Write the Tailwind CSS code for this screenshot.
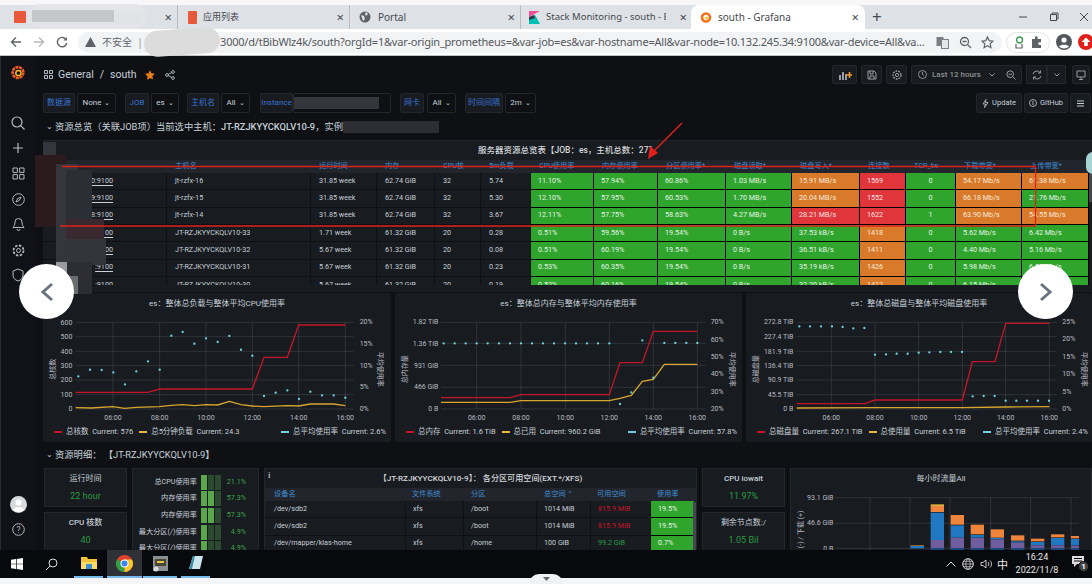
<!DOCTYPE html>
<html lang="en">
<head>
<meta charset="UTF-8" />
<title>south - Grafana</title>
<script src="https://cdn.jsdelivr.net/npm/@tailwindcss/browser@4"></script>
</head>
<body class="w-[1092px] h-[584px] overflow-hidden relative bg-[#f4f5f6] font-['Roboto','Noto_Sans_CJK_SC',sans-serif]">

<!-- browser chrome -->
<div class="h-[5px] bg-[#f7f7f8]"></div>
<div class="h-[24px] bg-[#dee1e6] flex items-end pl-[8px] text-[10px] text-[#45494e] font-['Noto_Sans','Noto_Sans_CJK_SC',sans-serif]">
  <div class="w-[170px] h-[24px] flex items-center pl-[6px] pr-[5px] border-r border-[#9ea2a7]/60 relative">
    <span class="w-[12px] h-[12px] bg-[#e8583a] rounded-[1px]"></span>
    <span class="ml-[4px] w-[112px] h-[13px] bg-[#c6c8cc]"></span>
    <span class="ml-auto text-[13px] leading-none">×</span>
  </div>
  <div class="w-[172px] h-[24px] flex items-center pl-[10px] pr-[5px] border-r border-[#9ea2a7]/60">
    <span class="w-[9px] h-[13px] bg-[#e8583a] rounded-[1px]"></span>
    <span class="ml-[6px] text-[9px]">应用列表</span>
    <span class="ml-auto text-[13px] leading-none">×</span>
  </div>
  <div class="w-[171px] h-[24px] flex items-center pl-[9px] pr-[5px] border-r border-[#9ea2a7]/60">
    <svg width="12" height="12" viewBox="0 0 12 12"><circle cx="6" cy="6" r="5.5" fill="#5f6368"/><path d="M2 4l3 1 1 3-2 2zM7 1l2 2-2 2-1-2z" fill="#dee1e6"/></svg>
    <span class="ml-[7px]">Portal</span>
    <span class="ml-auto text-[13px] leading-none">×</span>
  </div>
  <div class="w-[171px] h-[24px] flex items-center pl-[8px] pr-[5px]">
    <svg width="11" height="13" viewBox="0 0 11 13"><path d="M0 0h11L0 6z" fill="#f04e98"/><path d="M0 7l6-3 5 9H0z" fill="#00bfb3"/><path d="M0 6l5-2 1 3-6 2z" fill="#343741"/></svg>
    <span class="ml-[6px] w-[120px] whitespace-nowrap overflow-hidden text-[9.5px]">Stack Monitoring - south - Ela</span>
    <span class="ml-auto text-[13px] leading-none">×</span>
  </div>
  <div class="w-[174px] h-[24px] bg-white rounded-t-[8px] flex items-center pl-[9px] pr-[6px] -ml-[1px]">
    <svg width="12" height="13" viewBox="0 0 12 13"><circle cx="6" cy="6.5" r="4" fill="none" stroke="#f2711c" stroke-width="2.6"/><circle cx="6.5" cy="7" r="1.6" fill="#fbc02d"/></svg>
    <span class="ml-[6px]">south - Grafana</span>
    <span class="ml-auto text-[13px] leading-none">×</span>
  </div>
  <span class="ml-[7px] mb-[4px] text-[17px] leading-none">+</span>
  <div class="ml-auto h-[24px] w-[90px] flex items-center justify-between pl-[16px] pr-[3px] text-[#45494e]">
    <svg width="10" height="10" viewBox="0 0 10 10"><path d="M1 5h8" stroke="currentColor"/></svg>
    <svg width="10" height="10" viewBox="0 0 10 10"><path d="M1.5 2.5h6v6h-6zM3 2.5V1h6v6H7.5" fill="none" stroke="currentColor"/></svg>
    <svg width="10" height="10" viewBox="0 0 10 10"><path d="M1 1l8 8M9 1l-8 8" stroke="currentColor"/></svg>
  </div>
</div>
<div class="h-[27px] bg-white border-b border-[#bfc2c6] flex items-center text-[#5f6368]">
  <div class="w-[78px] flex items-center pl-[10px] gap-[11px] shrink-0">
    <svg width="12" height="12" viewBox="0 0 12 12"><path d="M11 6H2M6 1.5L1.5 6 6 10.5" fill="none" stroke="#5f6368" stroke-width="1.4"/></svg>
    <svg width="12" height="12" viewBox="0 0 12 12"><path d="M1 6h9M6 1.5L10.5 6 6 10.5" fill="none" stroke="#b5b8bc" stroke-width="1.4"/></svg>
    <svg width="12" height="12" viewBox="0 0 12 12"><path d="M10.3 4A4.7 4.7 0 1 0 10.7 7" fill="none" stroke="#5f6368" stroke-width="1.4"/><path d="M11 1v3.6H7.4z" fill="#5f6368"/></svg>
  </div>
  <div class="w-[924px] h-[21px] bg-[#f1f3f4] rounded-full flex items-center pl-[7px] relative shrink-0 text-[11px] font-['Noto_Sans','Noto_Sans_CJK_SC',sans-serif]">
    <svg width="11" height="10" viewBox="0 0 11 10"><path d="M5.5 0L11 10H0z" fill="#5f6368"/></svg>
    <span class="ml-[6px] text-[10px] whitespace-nowrap text-[#5f6368]">不安全</span>
    <span class="ml-[5px] text-[#9a9da1]">|</span>
    <span class="ml-[77px] whitespace-nowrap text-[#55585c] tracking-[-0.02em]">3000/d/tBibWlz4k/south?orgId=1&amp;var-origin_prometheus=&amp;var-job=es&amp;var-hostname=All&amp;var-node=10.132.245.34:9100&amp;var-device=All&amp;va...</span>
    <div class="absolute left-[66px] top-[-3px] w-[76px] h-[26px] bg-[#dcdcdc] rounded-full -rotate-[4deg]"></div>
    <svg class="absolute left-[858px] top-[4px]" width="13" height="13" viewBox="0 0 13 13"><rect x=".5" y="1" width="7" height="9" fill="#7b7f84"/><rect x="5.5" y="3.5" width="7" height="9" fill="#e4e6e8" stroke="#7b7f84"/></svg>
    <svg class="absolute left-[881px] top-[4px]" width="13" height="13" viewBox="0 0 13 13"><circle cx="5.5" cy="5.5" r="4" fill="none" stroke="#5f6368" stroke-width="1.3"/><path d="M8.5 8.5l3.5 3.5M3.5 5.5h4" stroke="#5f6368" stroke-width="1.3"/></svg>
    <svg class="absolute left-[903px] top-[4px]" width="13" height="13" viewBox="0 0 13 13"><path d="M6.5 1l1.7 3.6 3.8.5-2.8 2.7.7 3.9-3.4-1.9-3.4 1.9.7-3.9L1 5.1l3.800-.5z" fill="none" stroke="#5f6368" stroke-width="1.2"/></svg>
  </div>
  <div class="ml-[4px] w-[44px] h-[21px] rounded-full border border-[#e3e4e6] flex items-center justify-around px-[3px] shrink-0">
    <svg width="12" height="14" viewBox="0 0 12 14"><circle cx="6.5" cy="5" r="3" fill="none" stroke="#3a9b4d" stroke-width="1.4"/><path d="M3 9v4h6V9" fill="none" stroke="#5f6368" stroke-width="1.2"/></svg>
    <svg width="12" height="12" viewBox="0 0 12 12"><path d="M1 3h3V1.5a1.3 1.3 0 0 1 2.6 0V3H10v3.2H8.6a1.4 1.4 0 0 0 0 2.8H10V12H1z" fill="#5f6368"/></svg>
  </div>
  <svg class="ml-[6px] shrink-0" width="16" height="16" viewBox="0 0 16 16"><circle cx="8" cy="8" r="8" fill="#53575c"/><circle cx="8" cy="6" r="2.6" fill="#fff"/><path d="M3 12.5c1.5-2.5 8.5-2.5 10 0-2.5 2.5-7.5 2.5-10 0z" fill="#fff"/></svg>
  <svg class="ml-[6px] shrink-0" width="14" height="16" viewBox="0 0 14 16"><circle cx="8" cy="8" r="8" fill="#e0201b"/><path d="M8 3.500L3.500 8h2.700v4h3.600V8h2.700z" fill="#fff"/></svg>
</div>

<!-- grafana -->
<div class="h-[494px] bg-[#0e1014] flex overflow-hidden text-[#c7d0d9]">
  <nav class="w-[35px] shrink-0 bg-[#111217] border-l border-[#2a2c31] flex flex-col items-center text-[#b6b9bf] relative">
    <svg class="mt-[8px]" width="16" height="17" viewBox="0 0 16 17"><circle cx="8" cy="8.5" r="5.4" fill="none" stroke="#f05a28" stroke-width="2.6" stroke-dasharray="3 .7"/><circle cx="8.4" cy="9" r="2.6" fill="none" stroke="#fbb324" stroke-width="1.5"/></svg>
    <svg class="mt-[35px]" width="14" height="14" viewBox="0 0 14 14"><circle cx="6" cy="6" r="5" fill="none" stroke="currentColor" stroke-width="1.2"/><path d="M9.700 9.700L13.500 13.500" stroke="currentColor" stroke-width="1.2"/></svg>
    <svg class="mt-[12px]" width="12" height="12" viewBox="0 0 12 12"><path d="M6 1v10M1 6h10" stroke="currentColor" stroke-width="1.2"/></svg>
    <svg class="mt-[13px]" width="13" height="13" viewBox="0 0 13 13"><path d="M1 1h4.400v4.400H1zM7.600 1H12v4.400H7.600zM1 7.600h4.400V12H1zM7.600 7.600H12V12H7.600z" fill="none" stroke="currentColor"/></svg>
    <svg class="mt-[13px]" width="13" height="13" viewBox="0 0 13 13"><circle cx="6.500" cy="6.500" r="5.800" fill="none" stroke="currentColor"/><path d="M9 4L7.400 7.400 4 9l1.600-3.400z" fill="none" stroke="currentColor"/></svg>
    <svg class="mt-[11px]" width="13" height="14" viewBox="0 0 13 14"><path d="M6.500 1.500a3.500 3.500 0 0 1 3.500 3.500c0 3.500 1.500 4.600 2 5.500H1c.5-.9 2-2 2-5.500a3.500 3.500 0 0 1 3.500-3.500zM5 12a1.500 1.500 0 0 0 3 0" fill="none" stroke="currentColor"/></svg>
    <svg class="mt-[13px]" width="13" height="13" viewBox="0 0 13 13"><circle cx="6.500" cy="6.500" r="2" fill="none" stroke="currentColor"/><circle cx="6.500" cy="6.500" r="5" fill="none" stroke="currentColor" stroke-width="1.800" stroke-dasharray="2.400 1.500"/></svg>
    <svg class="mt-[11px]" width="12" height="14" viewBox="0 0 12 14"><path d="M6 1l5 2v4c0 3-2 5-5 6-3-1-5-3-5-6V3z" fill="none" stroke="currentColor"/></svg>
    <div class="mt-auto flex flex-col items-center">
      <svg width="17" height="17" viewBox="0 0 17 17"><circle cx="8.500" cy="8.500" r="8.500" fill="#d8d9db"/><circle cx="8.500" cy="6.500" r="3" fill="#fff"/><path d="M3 14c1-4 10-4 11 0a8.500 8.500 0 0 1-11 0z" fill="#fff"/></svg>
      <svg class="mt-[10px] mb-[14px]" width="13" height="13" viewBox="0 0 13 13"><circle cx="6.500" cy="6.500" r="5.800" fill="none" stroke="currentColor"/><text x="6.500" y="9.600" text-anchor="middle" font-size="8.500" fill="currentColor">?</text></svg>
    </div>
  </nav>

  <main class="flex-1 min-w-0 flex flex-col relative">
    <!-- top bar -->
    <div class="h-[36px] shrink-0 flex items-start pt-[12px] pl-[9px] pr-[2px]">
      <svg class="mt-[2px]" width="9" height="9" viewBox="0 0 9 9"><path d="M.5.5h3v3h-3zM5.500.5h3v3h-3zM.5 5.500h3v3h-3zM5.500 5.500h3v3h-3z" fill="none" stroke="#c7d0d9" stroke-width=".9"/></svg>
      <span class="ml-[5px] text-[10.5px] leading-[12px] mt-[1px]">General</span>
      <span class="ml-[6px] text-[10.5px] leading-[12px] mt-[1px]">/</span>
      <span class="ml-[6px] text-[10.5px] leading-[12px] mt-[1px]">south</span>
      <svg class="ml-[9px] mt-[2px]" width="10" height="10" viewBox="0 0 10 10"><path d="M5 .3l1.500 3 3.300.4-2.400 2.300.6 3.300L5 8.200 2 9.800l.6-3.300L.2 3.700l3.300-.4z" fill="#eb7b18"/></svg>
      <svg class="ml-[10px] mt-[2px]" width="10" height="10" viewBox="0 0 10 10"><circle cx="2" cy="5" r="1.400" fill="none" stroke="#c7d0d9" stroke-width=".8"/><circle cx="8" cy="2" r="1.400" fill="none" stroke="#c7d0d9" stroke-width=".8"/><circle cx="8" cy="8" r="1.400" fill="none" stroke="#c7d0d9" stroke-width=".8"/><path d="M3.200 4.400l3.600-1.800M3.200 5.600l3.600 1.800" stroke="#c7d0d9" stroke-width=".8"/></svg>
      <div class="ml-auto -mt-[3px] flex items-center gap-[4px] text-[#8e9094]">
        <div class="w-[25px] h-[19px] bg-[#181b1f] border border-[#24272c] rounded-[2px] flex items-center justify-center">
          <svg width="14" height="10" viewBox="0 0 14 10"><path d="M1 10V5h2v5zM4 10V2h2v8zM7 10V4h2v6z" fill="#9a9ca0"/><path d="M11.500 2v6M8.500 5h6" stroke="#f1972c" stroke-width="1.600"/></svg>
        </div>
        <div class="w-[21px] h-[19px] bg-[#181b1f] border border-[#24272c] rounded-[2px] flex items-center justify-center">
          <svg width="10" height="10" viewBox="0 0 10 10"><path d="M1 1h6l2 2v6H1zM3 1v3h3V1M3 9V6h4v3" fill="none" stroke="#9a9ca0"/></svg>
        </div>
        <div class="w-[21px] h-[19px] bg-[#181b1f] border border-[#24272c] rounded-[2px] flex items-center justify-center">
          <svg width="10" height="10" viewBox="0 0 10 10"><circle cx="5" cy="5" r="1.600" fill="none" stroke="#9a9ca0"/><circle cx="5" cy="5" r="4" fill="none" stroke="#9a9ca0" stroke-width="1.400" stroke-dasharray="1.800 1"/></svg>
        </div>
        <div class="w-[111px] h-[19px] bg-[#181b1f] border border-[#24272c] rounded-[2px] flex items-center pl-[6px] text-[8px] font-medium">
          <svg width="9" height="9" viewBox="0 0 9 9"><circle cx="4.500" cy="4.500" r="4" fill="none" stroke="#9a9ca0" stroke-width=".9"/><path d="M4.500 2v2.600L6 5.500" fill="none" stroke="#9a9ca0" stroke-width=".9"/></svg>
          <span class="ml-[5px] whitespace-nowrap">Last 12 hours</span>
          <svg class="ml-[8px]" width="6" height="4" viewBox="0 0 6 4"><path d="M.5.5L3 3 5.500.5" fill="none" stroke="#9a9ca0"/></svg>
          <svg class="ml-auto mr-[5px]" width="10" height="10" viewBox="0 0 10 10"><circle cx="4.200" cy="4.200" r="3.300" fill="none" stroke="#9a9ca0"/><path d="M6.600 6.600L9.500 9.500M2.500 4.200h3.400" stroke="#9a9ca0"/></svg>
        </div>
        <div class="w-[40px] h-[19px] flex">
          <div class="w-[21px] bg-[#181b1f] border border-[#24272c] flex items-center justify-center">
            <svg width="10" height="10" viewBox="0 0 10 10"><path d="M1 4a4 4 0 0 1 7-1.500M9 6a4 4 0 0 1-7 1.500" fill="none" stroke="#9a9ca0"/><path d="M8.500.5v2.500H6M1.500 9.500V7H4" fill="none" stroke="#9a9ca0"/></svg>
          </div>
          <div class="w-[19px] bg-[#181b1f] border border-[#24272c] flex items-center justify-center">
            <svg width="6" height="4" viewBox="0 0 6 4"><path d="M.5.5L3 3 5.500.5" fill="none" stroke="#9a9ca0"/></svg>
          </div>
        </div>
        <div class="ml-[2px] w-[18px] h-[19px] bg-[#181b1f] border border-[#24272c] rounded-[2px] flex items-center justify-center">
          <svg width="10" height="10" viewBox="0 0 10 10"><path d="M1 1h8v6H1zM3 9.500h4M5 7v2" fill="none" stroke="#9a9ca0"/></svg>
        </div>
      </div>
    </div>

    <!-- variables -->
    <div class="h-[21px] shrink-0 pl-[8px] flex items-stretch text-[8px]">
      <span class="w-[32px] mt-[1px] bg-[#181b1f] border border-[#23262b] rounded-[2px] text-[#3a74d3] flex items-center justify-center">数据源</span>
      <span class="ml-[2px] w-[39px] mt-[1px] border border-[#23262b] rounded-[2px] flex items-center justify-center gap-[3px]">None <i class="text-[7px] not-italic">⌄</i></span>
      <span class="ml-[9px] w-[24px] mt-[1px] bg-[#181b1f] border border-[#23262b] rounded-[2px] text-[#3a74d3] flex items-center justify-center">JOB</span>
      <span class="ml-[2px] w-[28px] mt-[1px] border border-[#23262b] rounded-[2px] flex items-center justify-center gap-[3px]">es <i class="text-[7px] not-italic">⌄</i></span>
      <span class="ml-[8px] w-[32px] mt-[1px] bg-[#181b1f] border border-[#23262b] rounded-[2px] text-[#3a74d3] flex items-center justify-center">主机名</span>
      <span class="ml-[2px] w-[29px] mt-[1px] border border-[#23262b] rounded-[2px] flex items-center justify-center gap-[3px]">All <i class="text-[7px] not-italic">⌄</i></span>
      <span class="ml-[10px] w-[33px] mt-[1px] bg-[#181b1f] border border-[#23262b] rounded-[2px] text-[#3a74d3] flex items-center justify-center">Instance</span>
      <span class="w-[98px] mt-[1px] border border-[#23262b] rounded-[2px] flex items-center"><i class="w-[85px] h-[12px] bg-[#34363b]"></i></span>
      <span class="ml-[9px] w-[24px] mt-[1px] bg-[#181b1f] border border-[#23262b] rounded-[2px] text-[#3a74d3] flex items-center justify-center">网卡</span>
      <span class="ml-[3px] w-[29px] mt-[1px] border border-[#23262b] rounded-[2px] flex items-center justify-center gap-[3px]">All <i class="text-[7px] not-italic">⌄</i></span>
      <span class="ml-[9px] w-[38px] mt-[1px] bg-[#181b1f] border border-[#23262b] rounded-[2px] text-[#3a74d3] flex items-center justify-center">时间间隔</span>
      <span class="ml-[2px] w-[31px] mt-[1px] border border-[#23262b] rounded-[2px] flex items-center justify-center gap-[3px]">2m <i class="text-[7px] not-italic">⌄</i></span>
      <div class="ml-auto mr-[1px] flex gap-[2px]">
        <span class="w-[46px] mt-[1px] bg-[#181b1f] border border-[#23262b] rounded-[2px] flex items-center justify-center gap-[3px] text-[7.5px]"><svg width="7" height="9" viewBox="0 0 7 9"><path d="M4 .5L1 5h2.500L2.500 8.500 6 3.500H3.500z" fill="none" stroke="#c7d0d9" stroke-width=".8"/></svg>Update</span>
        <span class="w-[44px] mt-[1px] bg-[#181b1f] border border-[#23262b] rounded-[2px] flex items-center justify-center gap-[3px] text-[7.5px]"><svg width="8" height="8" viewBox="0 0 8 8"><circle cx="4" cy="4" r="3.500" fill="none" stroke="#c7d0d9" stroke-width=".8"/><path d="M4 2v4" stroke="#c7d0d9" stroke-width=".8"/></svg>GitHub</span>
        <span class="w-[21px] mt-[1px] bg-[#181b1f] border border-[#23262b] rounded-[2px] flex items-center justify-center"><svg width="9" height="7" viewBox="0 0 9 7"><path d="M1 1h7M1 3.500h7M1 6h7" stroke="#c7d0d9"/></svg></span>
      </div>
    </div>

    <!-- section 1 -->
    <div class="h-[27px] pl-[11px] flex items-center text-[9.3px] whitespace-nowrap shrink-0">
      <span class="text-[8px] mr-[2px]">⌄</span>资源总览（关联JOB项）当前选中主机：<b class="font-medium">JT-RZJKYYCKQLV10-9</b>，实例<i class="w-[96px] h-[12px] bg-[#2c2e33]"></i>
    </div>

    <div class="ml-[8px] h-[152px] shrink-0 bg-[#181b1f] border-t border-[#22252a] overflow-hidden">
      <div class="h-[19px] flex items-center justify-center text-[8.5px] font-medium text-[#d4d7dc]">服务器资源总览表【JOB：es，主机总数：27】</div>
      <div class="h-[125px] overflow-hidden" id="hosts"></div>
    </div>

    <!-- charts -->
    <div class="ml-[8px] mt-[1px] h-[149px] flex gap-[4px] shrink-0">
      <section class="w-[348px] bg-[#181b1f] rounded-[2px] shrink-0 flex flex-col">
        <h3 class="h-[22px] flex items-center justify-center text-[8px] text-[#c7d0d9]">es：整体总负载与整体平均CPU使用率</h3>
        <svg class="block" width="348" height="107" viewBox="130 75 1044 321" font-size="21" fill="#b8bcc4">
          <path d="M228 97H1062M228 140H1062M228 184H1062M228 227H1062M228 270H1062M228 314H1062M228 357H1062M340 97V357M480 97V357M619 97V357M758 97V357M897 97V357M1037 97V357" stroke="#fff" stroke-opacity=".13" stroke-width="2.500" fill="none"/>
          <g text-anchor="end"><text x="218" y="104">600</text><text x="218" y="147">500</text><text x="218" y="191">400</text><text x="218" y="234">300</text><text x="218" y="277">200</text><text x="218" y="321">100</text><text x="218" y="364">0</text></g>
          <g><text x="1080" y="102">20%</text><text x="1080" y="167">15%</text><text x="1080" y="233">10%</text><text x="1080" y="298">5%</text><text x="1080" y="364">0%</text></g>
          <g text-anchor="middle"><text x="340" y="389">06:00</text><text x="480" y="389">08:00</text><text x="619" y="389">10:00</text><text x="758" y="389">12:00</text><text x="897" y="389">14:00</text><text x="1037" y="389">16:00</text></g>
          <text transform="translate(167 238) rotate(-90)" text-anchor="middle">总核数</text>
          <text transform="translate(1136 238) rotate(90)" text-anchor="middle">平均使用率</text>
          <path d="M228 353L275 354 340 350 375 355 410 352 480 350 515 346 549 344 584 347 619 344 654 345 689 334 724 344 758 348 793 350 863 347 897 348 932 342 1002 342 1037 347" fill="none" stroke="#d8a62e" stroke-width="4"/>
          <path d="M228 307H445L480 297H758L793 202H863L897 105H1037" fill="none" stroke="#c4162a" stroke-width="4"/>
          <path d="M236 259h0M271 239h0M306 240h0M341 247h0M376 283h0M410 244h0M445 214h0M480 239h0M515 137h0M549 126h0M584 161h0M619 145h0M654 156h0M689 138h0M724 179h0M758 197h0M793 318h0M828 308h0M863 301h0M898 327h0M932 305h0M967 316h0M1002 316h0M1037 323h0" stroke="#6ed0e0" stroke-width="7" stroke-linecap="round" fill="none"/>
        </svg>
        <div class="h-[20px] pl-[11px] pr-[5px] flex items-center text-[7.5px] text-[#c7d0d9] whitespace-nowrap">
          <i class="w-[8px] h-[2px] bg-[#c4162a] mr-[4px]"></i>总核数&nbsp; Current: 576
          <i class="w-[8px] h-[2px] bg-[#eab839] ml-[6px] mr-[4px]"></i>总5分钟负载&nbsp; Current: 24.3
          <i class="ml-auto w-[8px] h-[2px] bg-[#6ed0e0] mr-[4px]"></i>总平均使用率&nbsp; Current: 2.6%
        </div>
      </section>

      <section class="w-[347px] bg-[#181b1f] rounded-[2px] shrink-0 flex flex-col">
        <h3 class="h-[22px] flex items-center justify-center text-[8px] text-[#c7d0d9]">es：整体总内存与整体平均内存使用率</h3>
        <svg class="block" width="347" height="107" viewBox="15 75 1041 321" font-size="21" fill="#b8bcc4">
          <path d="M153 97H947M153 160H947M153 226H947M153 292H947M153 357H947M260 97V357M393 97V357M526 97V357M658 97V357M790 97V357M922 97V357" stroke="#fff" stroke-opacity=".13" stroke-width="2.500" fill="none"/>
          <g text-anchor="end"><text x="145" y="102">1.82 TiB</text><text x="145" y="167">1.36 TiB</text><text x="145" y="233">931 GiB</text><text x="145" y="298">466 GiB</text><text x="145" y="364">0 B</text></g>
          <g><text x="962" y="102">70%</text><text x="962" y="155">60%</text><text x="962" y="207">50%</text><text x="962" y="259">40%</text><text x="962" y="312">30%</text><text x="962" y="364">20%</text></g>
          <g text-anchor="middle"><text x="260" y="389">06:00</text><text x="393" y="389">08:00</text><text x="526" y="389">10:00</text><text x="658" y="389">12:00</text><text x="790" y="389">14:00</text><text x="922" y="389">16:00</text></g>
          <text transform="translate(52 238) rotate(-90)" text-anchor="middle">总内存量</text>
          <text transform="translate(1020 238) rotate(90)" text-anchor="middle">平均使用率</text>
          <path d="M153 337H360L393 332H658L690 325 724 316 757 274 790 268 823 223H922" fill="none" stroke="#d8a62e" stroke-width="4"/>
          <path d="M153 323H360L393 314H658L690 218H757L790 124H922" fill="none" stroke="#c4162a" stroke-width="4"/>
          <path d="M161 160h0M194 160h0M227 160h0M260 160h0M293 160h0M327 160h0M360 160h0M393 160h0M426 160h0M459 160h0M492 160h0M525 160h0M558 160h0M591 160h0M624 160h0M658 160h0M690 342h0M724 307h0M757 151h0M790 263h0M823 159h0M856 159h0M889 159h0M922 159h0" stroke="#6ed0e0" stroke-width="7" stroke-linecap="round" fill="none"/>
        </svg>
        <div class="h-[20px] pl-[11px] pr-[5px] flex items-center text-[7.5px] text-[#c7d0d9] whitespace-nowrap">
          <i class="w-[8px] h-[2px] bg-[#c4162a] mr-[4px]"></i>总内存&nbsp; Current: 1.6 TiB
          <i class="w-[8px] h-[2px] bg-[#eab839] ml-[6px] mr-[4px]"></i>总已用&nbsp; Current: 960.2 GiB
          <i class="ml-auto w-[8px] h-[2px] bg-[#6ed0e0] mr-[4px]"></i>总平均使用率&nbsp; Current: 57.8%
        </div>
      </section>

      <section class="w-[346px] bg-[#181b1f] rounded-[2px] shrink-0 flex flex-col">
        <h3 class="h-[22px] flex items-center justify-center text-[8px] text-[#c7d0d9]">es：整体总磁盘与整体平均磁盘使用率</h3>
        <svg class="block" width="346" height="107" viewBox="18 75 1038 321" font-size="21" fill="#b8bcc4">
          <path d="M170 97H950M170 140H950M170 184H950M170 227H950M170 270H950M170 314H950M170 357H950M274 97V357M405 97V357M536 97V357M667 97V357M797 97V357M928 97V357" stroke="#fff" stroke-opacity=".13" stroke-width="2.500" fill="none"/>
          <g text-anchor="end"><text x="160" y="102">272.8 TiB</text><text x="160" y="147">227.4 TiB</text><text x="160" y="191">181.9 TiB</text><text x="160" y="234">136.4 TiB</text><text x="160" y="277">90.9 TiB</text><text x="160" y="321">45.5 TiB</text><text x="160" y="364">0 B</text></g>
          <g><text x="967" y="102">25%</text><text x="967" y="154">20%</text><text x="967" y="207">15%</text><text x="967" y="259">10%</text><text x="967" y="312">5%</text><text x="967" y="364">0%</text></g>
          <g text-anchor="middle"><text x="274" y="389">06:00</text><text x="405" y="389">08:00</text><text x="536" y="389">10:00</text><text x="667" y="389">12:00</text><text x="797" y="389">14:00</text><text x="928" y="389">16:00</text></g>
          <text transform="translate(55 238) rotate(-90)" text-anchor="middle">总磁盘量</text>
          <text transform="translate(1026 238) rotate(90)" text-anchor="middle">平均使用率</text>
          <path d="M170 354L405 353 667 353 797 351 928 350" fill="none" stroke="#d8a62e" stroke-width="4"/>
          <path d="M170 341H375L405 330H667L697 215H765L797 100H928" fill="none" stroke="#c4162a" stroke-width="4"/>
          <path d="M178 109h0M210 109h0M243 109h0M276 109h0M308 111h0M340 115h0M373 114h0M405 194h0M438 193h0M470 191h0M503 191h0M536 188h0M568 187h0M601 186h0M633 186h0M666 186h0M698 319h0M731 318h0M764 318h0M797 332h0M829 332h0M861 332h0M894 332h0M927 332h0" stroke="#6ed0e0" stroke-width="7" stroke-linecap="round" fill="none"/>
        </svg>
        <div class="h-[20px] pl-[11px] pr-[4px] flex items-center text-[7.5px] text-[#c7d0d9] whitespace-nowrap">
          <i class="w-[8px] h-[2px] bg-[#c4162a] mr-[4px]"></i>总磁盘量&nbsp; Current: 267.1 TiB
          <i class="w-[8px] h-[2px] bg-[#eab839] ml-[6px] mr-[4px]"></i>总使用量&nbsp; Current: 6.5 TiB
          <i class="ml-auto w-[8px] h-[2px] bg-[#6ed0e0] mr-[4px]"></i>总平均使用率&nbsp; Current: 2.4%
        </div>
      </section>
    </div>

    <!-- section 2 -->
    <div class="h-[26px] pl-[11px] flex items-center text-[9.3px] whitespace-nowrap shrink-0">
      <span class="text-[8px] mr-[2px]">⌄</span>资源明细：&nbsp;【JT-RZJKYYCKQLV10-9】
    </div>

    <div class="ml-[9px] flex gap-[5px] items-start shrink-0">
      <!-- stats -->
      <div class="w-[83px] shrink-0 flex flex-col gap-[5px]">
        <div class="h-[39px] bg-[#181b1f] border border-[#23262b] flex flex-col items-center pt-[4px] text-[8px]"><span>运行时间</span><span class="mt-[5px] text-[9px] text-[#299c46]">22 hour</span></div>
        <div class="h-[39px] bg-[#181b1f] border border-[#23262b] flex flex-col items-center pt-[4px] text-[8px] font-medium"><span>CPU 核数</span><span class="mt-[5px] text-[9px] font-normal text-[#299c46]">40</span></div>
      </div>
      <!-- bar gauges -->
      <div class="w-[127px] shrink-0 h-[84px] bg-[#181b1f] border border-[#23262b] flex flex-col pt-[5px] text-[7.2px] text-[#c7d0d9]" id="gauges"></div>
      <!-- partitions -->
      <div class="w-[433px] shrink-0 h-[84px] bg-[#181b1f] border border-[#23262b] relative overflow-hidden">
        <span class="absolute left-[3px] top-[1px] text-[8px] text-[#aeb1b6] font-serif font-bold">i</span>
        <div class="h-[19px] flex items-center justify-center text-[8.1px] font-medium text-[#d4d7dc]">【JT-RZJKYYCKQLV10-9】： 各分区可用空间(EXT.*/XFS)</div>
        <div class="h-[13px] bg-[#22252b] grid grid-cols-[141px_58px_73px_54px_60px_44px] text-[7.2px] text-[#3f8fd6] items-center">
          <span class="pl-[9px]">设备名</span><span class="pl-[6px]">文件系统</span><span class="pl-[7px]">分区</span><span class="pl-[7px]">总空间 ⌃</span><span class="pl-[6px]">可用空间</span><span class="pl-[6px]">使用率</span>
        </div>
        <div id="parts"></div>
        <i class="absolute right-0 top-[33px] w-[3px] h-[50px] bg-[#44474d]"></i>
      </div>
      <!-- stats -->
      <div class="w-[83px] shrink-0 flex flex-col gap-[5px]">
        <div class="h-[39px] bg-[#181b1f] border border-[#23262b] flex flex-col items-center pt-[4px] text-[8px] font-medium"><span>CPU iowait</span><span class="mt-[5px] text-[9px] font-normal text-[#299c46]">11.97%</span></div>
        <div class="h-[39px] bg-[#181b1f] border border-[#23262b] flex flex-col items-center pt-[4px] text-[8px]"><span>剩余节点数:/</span><span class="mt-[5px] text-[9px] text-[#299c46]">1.05 Bil</span></div>
      </div>
      <!-- hourly traffic -->
      <div class="w-[302px] shrink-0 h-[84px] bg-[#181b1f] border border-[#23262b] overflow-hidden">
        <div class="h-[19px] flex items-center justify-center text-[8px] text-[#c7d0d9]">每小时流量All</div>
        <svg class="block" width="300" height="64" viewBox="33 126 900 192" font-size="21" fill="#b8bcc4">
          <path d="M165 155H897M165 232H897M165 307H897M270 155V320M390 155V320M510 155V320M632 155V320M752 155V320M873 155V320" stroke="#fff" stroke-opacity=".13" stroke-width="2.500" fill="none"/>
          <g text-anchor="end"><text x="160" y="162">93.1 GiB</text><text x="160" y="238">46.6 GiB</text><text x="160" y="314">0 B</text></g>
          <text transform="translate(68 250) rotate(-90)" text-anchor="middle">(-) / 下载 (+)</text>
          <path d="M392 298h40v3h-40z" fill="#e0883a"/><path d="M392 300h40v7h-40z" fill="#1f78c1"/>
          <path d="M452 175h40v5h-40z" fill="#d8b03a"/><path d="M452 180h40v18h-40z" fill="#ef843c"/><path d="M452 200h40v82h-40z" fill="#1f78c1"/><path d="M452 282h40v25h-40z" fill="#705da0"/>
          <path d="M512 207h40v29h-40z" fill="#ef843c"/><path d="M512 238h40v37h-40z" fill="#1f78c1"/><path d="M512 275h40v32h-40z" fill="#705da0"/>
          <path d="M572 236h40v29h-40z" fill="#ef843c"/><path d="M572 267h40v8h-40z" fill="#1f78c1"/><path d="M572 276h40v31h-40z" fill="#705da0"/>
          <path d="M632 250h40v25h-40z" fill="#ef843c"/><path d="M632 276h40v4h-40z" fill="#1f78c1"/><path d="M632 280h40v27h-40z" fill="#705da0"/>
          <path d="M693 268h40v16h-40z" fill="#ef843c"/><path d="M693 286h40v4h-40z" fill="#1f78c1"/><path d="M693 290h40v17h-40z" fill="#705da0"/>
          <path d="M753 278h40v8h-40z" fill="#ef843c"/><path d="M753 288h40v10h-40z" fill="#1f78c1"/><path d="M753 298h40v9h-40z" fill="#705da0"/>
          <path d="M813 265h40v9h-40z" fill="#ef843c"/><path d="M813 276h40v22h-40z" fill="#1f78c1"/><path d="M813 298h40v9h-40z" fill="#705da0"/>
          <path d="M873 270h24v7h-24z" fill="#ef843c"/><path d="M873 279h24v19h-24z" fill="#1f78c1"/><path d="M873 299h24v8h-24z" fill="#705da0"/>
          <path d="M452 307h40v11h-40zM512 307h40v11h-40zM572 307h40v11h-40zM632 307h40v11h-40zM693 307h40v11h-40zM753 307h40v11h-40zM813 307h40v11h-40zM873 307h24v11h-24z" fill="#154a80"/>
        </svg>
      </div>
    </div>
  </main>
</div>

<!-- taskbar -->
<div class="h-[28px] bg-[#08090c] flex items-stretch text-[#e8e8e8] relative">
  <div class="w-[74px] flex items-center pl-[11px] gap-[22px]">
    <svg width="12" height="12" viewBox="0 0 12 12"><path d="M0 1.700L5 1v4.700H0zM5.700.9L12 0v5.700H5.700zM0 6.300h5V11l-5-.7zM5.700 6.300H12V12l-6.300-.9z" fill="#fff"/></svg>
    <svg width="13" height="13" viewBox="0 0 13 13"><circle cx="8" cy="5" r="4" fill="none" stroke="#ddd"/><path d="M5 8l-4 4" stroke="#ddd"/></svg>
  </div>
  <div class="w-[29px] flex items-center justify-center border-b-[2px] border-[#76b9ed]">
    <svg width="16" height="14" viewBox="0 0 16 14"><path d="M0 1h6l1 2h9v10H0z" fill="#f3c13a"/><path d="M0 6h16v7H0z" fill="#ffd966"/><path d="M5 8h6v5H5z" fill="#3d8fd1"/></svg>
  </div>
  <div class="ml-[4px] w-[35px] flex items-center justify-center bg-[#2f3136] border-b-[2px] border-[#76b9ed]">
    <svg width="17" height="17" viewBox="0 0 17 17"><circle cx="8.500" cy="8.500" r="8.500" fill="#e0412e"/><path d="M8.500 8.500L1.100 4.200A8.500 8.500 0 0 0 8.500 17z" fill="#2f9e44"/><path d="M8.500 4.500H16A8.500 8.500 0 0 1 8.500 17z" fill="#f7c52e"/><circle cx="8.500" cy="8.500" r="4" fill="#fff"/><circle cx="8.500" cy="8.500" r="3" fill="#3d82f0"/></svg>
  </div>
  <div class="ml-[1px] w-[34px] flex items-center justify-center border-b-[2px] border-[#76b9ed]">
    <svg width="17" height="17" viewBox="0 0 17 17"><rect x="1" y="1" width="15" height="15" fill="#8a8f94"/><rect x="3" y="4" width="11" height="7" fill="#4a4636"/><path d="M5 7h7" stroke="#e5c84b" stroke-width="2"/><circle cx="4" cy="14" r="2.500" fill="#ddd"/></svg>
  </div>
  <div class="ml-[4px] w-[29px] flex items-center justify-center border-b-[2px] border-[#76b9ed]">
    <svg width="16" height="16" viewBox="0 0 16 16"><path d="M5 1h10l-3 13H1z" fill="#cde6ee"/><path d="M5 1L1 14h3L7 1z" fill="#3b8fa8"/></svg>
  </div>
  <div class="ml-auto flex items-center pr-[6px]">
    <svg width="10" height="6" viewBox="0 0 10 6"><path d="M.5 5.500L5 1l4.500 4.500" fill="none" stroke="#ddd"/></svg>
    <svg class="ml-[6px]" width="12" height="12" viewBox="0 0 12 12"><circle cx="6" cy="6" r="5.300" fill="none" stroke="#ddd"/><path d="M.7 6h10.600M6 .7c-3 3-3 7.600 0 10.600M6 .7c3 3 3 7.600 0 10.600M1.500 3.300h9M1.500 8.700h9" fill="none" stroke="#ddd" stroke-width=".7"/></svg>
    <svg class="ml-[6px]" width="12" height="12" viewBox="0 0 12 12"><path d="M1 4.500h2L6 2v8L3 7.500H1z" fill="none" stroke="#ddd" stroke-width=".9"/><path d="M8 4c1 1 1 3 0 4M10 2.500c2 2 2 5 0 7" fill="none" stroke="#ddd" stroke-width=".9"/></svg>
    <span class="ml-[5px] text-[11px] font-['Noto_Sans_CJK_SC',sans-serif]">中</span>
    <div class="ml-[4px] w-[50px] flex flex-col items-center text-[9px] leading-[13px]"><span>16:24</span><span>2022/11/8</span></div>
    <span class="relative ml-[10px] w-[14px] h-[16px]">
      <svg width="12" height="11" viewBox="0 0 12 11"><path d="M0 0h12v8H5l-3 3V8H0z" fill="#ddd"/><path d="M2 2.500h8M2 5h8" stroke="#08090c"/></svg>
      <i class="absolute left-[6px] top-[5px] w-[11px] h-[11px] rounded-full bg-[#444] border border-[#08090c] text-[8px] leading-[9px] text-center not-italic text-white font-bold">1</i>
    </span>
  </div>
</div>
<div class="h-[6px] bg-[#f4f5f6]"></div>

<!-- overlays: screenshot markup on top of the page -->
<div class="absolute left-[28px] top-[4px] w-[118px] h-[25px] rounded-[12px] bg-[#e4e5e8]/90 pointer-events-none"></div>
<div class="absolute left-[32px] top-[10px] w-[82px] h-[12px] bg-[#c4c6ca]"></div>

<!-- mosaic over the first table column -->
<div class="absolute left-[43px] top-[142px] w-[13px] h-[14px] bg-[#33363c]"></div>
<div class="absolute left-[35px] top-[155px] w-[31px] h-[72px] bg-[#2b1a1e]"></div>
<div class="absolute left-[56px] top-[164px] w-[22px] h-[100px] bg-[#34363c]"></div>
<div class="absolute left-[66px] top-[170px] w-[26px] h-[56px] bg-[#2b2e35]"></div>
<div class="absolute left-[66px] top-[219px] w-[38px] h-[20px] bg-[#3a2a30]"></div>
<div class="absolute left-[70px] top-[239px] w-[36px] h-[26px] bg-[#33353b]"></div>
<div class="absolute left-[66px] top-[262px] w-[26px] h-[32px] bg-[#2c2e34]"></div>
<div class="absolute left-[56px] top-[262px] w-[11px] h-[14px] bg-[#9a9b9e]"></div>
<div class="absolute left-[66px] top-[276px] w-[12px] h-[18px] bg-[#6c6d70]"></div>

<!-- red box and arrow -->
<svg class="absolute left-0 top-0 pointer-events-none" width="1092" height="584" viewBox="0 0 1092 584" fill="none">
  <path d="M62 166.500H1035.500V226H60" stroke="#e0201b" stroke-width="1.300"/>
  <path d="M682 123L654 151" stroke="#e0201b" stroke-width="1.500"/>
  <path d="M648 159L650 146 658 153z" fill="#e0201b"/>
</svg>

<!-- carousel buttons -->
<div class="absolute left-[19px] top-[264px] w-[55px] h-[55px] rounded-full bg-white flex items-center justify-center">
  <svg width="16" height="20" viewBox="0 0 16 20"><path d="M13 2L4 10l9 8" fill="none" stroke="#6b7280" stroke-width="3"/></svg>
</div>
<div class="absolute left-[1018px] top-[264px] w-[55px] h-[55px] rounded-full bg-white flex items-center justify-center">
  <svg width="16" height="20" viewBox="0 0 16 20"><path d="M3 2l9 8-9 8" fill="none" stroke="#6b7280" stroke-width="3"/></svg>
</div>
<div class="absolute left-[1086px] top-[152px] w-[14px] h-[22px] rounded-full bg-[#a6d3d3]"></div>
<div class="absolute left-[1089px] top-[174px] w-[3px] h-[28px] bg-[#44474d]"></div>
<div class="absolute left-[529px] top-[574px] w-[34px] h-[10px] rounded-t-full bg-[#f0f1f2] flex justify-center pt-[3px]">
  <svg width="7" height="4" viewBox="0 0 7 4"><path d="M0 0h7L3.500 4z" fill="#666"/></svg>
</div>

<script>
  const green = 'bg-[#2fa52e] text-[#e6f3e6]';
  const orange = 'bg-[#d97a2b] text-[#f6ead9]';
  const red = 'bg-[#e0353b] text-[#f9e3e3]';
  const heads = ['', '主机名', '运行时间', '内存', 'CPU核', '5m负载', 'CPU使用率', '内存使用率', '分区使用率*', '磁盘读取*', '磁盘写入*', '连接数', 'TCP_tw', '下载带宽*', '上传带宽*'];
  // port, host, uptime, mem, cpu, load, then [value, colour] for each threshold cell
  const rows = [
    ['0:9100', 'jt-rzfx-16', '31.85 week', '62.74 GiB', '32', '5.74', ['11.10%', green], ['57.94%', green], ['60.86%', green], ['1.03 MB/s', green], ['15.91 MB/s', orange], ['1569', red], ['0', green], ['54.17 Mb/s', orange], ['61.38 Mb/s', orange]],
    ['9:9100', 'jt-rzfx-15', '31.85 week', '62.74 GiB', '32', '5.30', ['12.10%', green], ['57.95%', green], ['60.53%', green], ['1.70 MB/s', green], ['20.04 MB/s', orange], ['1552', red], ['0', green], ['66.18 Mb/s', orange], ['21.76 Mb/s', green]],
    ['8:9100', 'jt-rzfx-14', '31.85 week', '62.74 GiB', '32', '3.67', ['12.11%', green], ['57.75%', green], ['58.63%', green], ['4.27 MB/s', green], ['28.21 MB/s', red], ['1622', red], ['1', green], ['63.90 Mb/s', orange], ['54.55 Mb/s', orange]],
    ['100', 'JT-RZJKYYCKQLV10-33', '1.71 week', '61.32 GiB', '20', '0.28', ['0.51%', green], ['59.56%', green], ['19.54%', green], ['0 B/s', green], ['37.53 kB/s', green], ['1418', orange], ['0', green], ['5.62 Mb/s', green], ['6.42 Mb/s', green]],
    ['00', 'JT-RZJKYYCKQLV10-32', '5.67 week', '61.32 GiB', '20', '0.08', ['0.51%', green], ['60.19%', green], ['19.54%', green], ['0 B/s', green], ['36.51 kB/s', green], ['1411', orange], ['0', green], ['4.40 Mb/s', green], ['5.16 Mb/s', green]],
    [':9100', 'JT-RZJKYYCKQLV10-31', '5.67 week', '61.32 GiB', '20', '0.23', ['0.53%', green], ['60.35%', green], ['19.54%', green], ['0 B/s', green], ['35.19 kB/s', green], ['1426', orange], ['0', green], ['5.98 Mb/s', green], ['6.55 Mb/s', green]],
    [':9100', 'JT-RZJKYYCKQLV10-30', '5.67 week', '61.32 GiB', '20', '0.19', ['0.52%', green], ['60.16%', green], ['19.54%', green], ['0 B/s', green], ['32.20 kB/s', green], ['1412', orange], ['0', green], ['6.15 Mb/s', green], ['6.55 Mb/s', green]],
  ];
  const cols = 'grid grid-cols-[124px_144px_66px_58px_46px_50px_63px_64px_68px_66px_68px_46px_50px_66px_67px]';
  let html = `<div class="${cols} h-[13px] bg-[#22252b] items-center text-[7.2px] text-[#3f8fd6] whitespace-nowrap">` +
    heads.map(h => `<span class="pl-[8px] overflow-hidden">${h}</span>`).join('') + '</div>';
  rows.forEach(r => {
    html += `<div class="${cols} h-[17.35px] text-[7.2px] whitespace-nowrap">`;
    r.forEach((c, i) => {
      if (i === 0) html += `<span class="border-r border-b border-[#0e1014] flex items-center justify-end pr-[53px]"><u class="underline-offset-2">${c}</u></span>`;
      else if (i < 6) html += `<span class="border-r border-b border-[#0e1014] flex items-center pl-[8px]">${c}</span>`;
      else html += `<span class="${c[1]} border-r border-b border-black flex items-center ${i === 12 ? 'justify-center' : 'pl-[7px]'}">${c[0]}</span>`;
    });
    html += '</div>';
  });
  document.getElementById('hosts').innerHTML = html;

  const gauges = [['总CPU使用率', '21.1%', 1], ['内存使用率', '57.3%', 2], ['内存使用率', '57.3%', 2], ['最大分区(/)使用率', '4.9%', 1], ['最大分区(/)使用率', '4.9%', 1]];
  document.getElementById('gauges').innerHTML = gauges.map(g => `
    <div class="h-[16.6px] shrink-0 flex items-center">
      <span class="w-[64px] text-right whitespace-nowrap">${g[0]}</span>
      <span class="ml-[4px] flex gap-[1px]">
        <i class="w-[6px] h-[15px] ${g[2] > 0 ? 'bg-[#5aa64b]' : 'bg-[#2b4a2f]'}"></i>
        <i class="w-[6px] h-[15px] ${g[2] > 1 ? 'bg-[#5aa64b]' : 'bg-[#2b4a2f]'}"></i>
        <i class="w-[6px] h-[15px] bg-[#2b4a2f]"></i>
      </span>
      <span class="w-[25px] text-right text-[#3fa34a]">${g[1]}</span>
    </div>`).join('');

  const parts = [
    ['/dev/sdb2', 'xfs', '/boot', '1014 MiB', '815.9 MiB', 'text-[#c4162a]', '19.5%'],
    ['/dev/sdb2', 'xfs', '/boot', '1014 MiB', '815.9 MiB', 'text-[#c4162a]', '19.5%'],
    ['/dev/mapper/klas-home', 'xfs', '/home', '100 GiB', '99.2 GiB', 'text-[#299c46]', '0.7%'],
  ];
  document.getElementById('parts').innerHTML = parts.map(p => `
    <div class="h-[17.3px] grid grid-cols-[141px_58px_73px_54px_60px_44px] text-[7.2px]">
      <span class="pl-[9px] border-r border-b border-[#0e1014] flex items-center">${p[0]}</span>
      <span class="pl-[7px] border-r border-b border-[#0e1014] flex items-center">${p[1]}</span>
      <span class="pl-[7px] border-r border-b border-[#0e1014] flex items-center">${p[2]}</span>
      <span class="pl-[7px] border-r border-b border-[#0e1014] flex items-center">${p[3]}</span>
      <span class="pl-[7px] border-r border-b border-[#0e1014] flex items-center ${p[5]}">${p[4]}</span>
      <span class="pl-[7px] border-r border-b border-black flex items-center bg-[#2fa52e] text-[#e6f3e6]">${p[6]}</span>
    </div>`).join('');
</script>
</body>
</html>
